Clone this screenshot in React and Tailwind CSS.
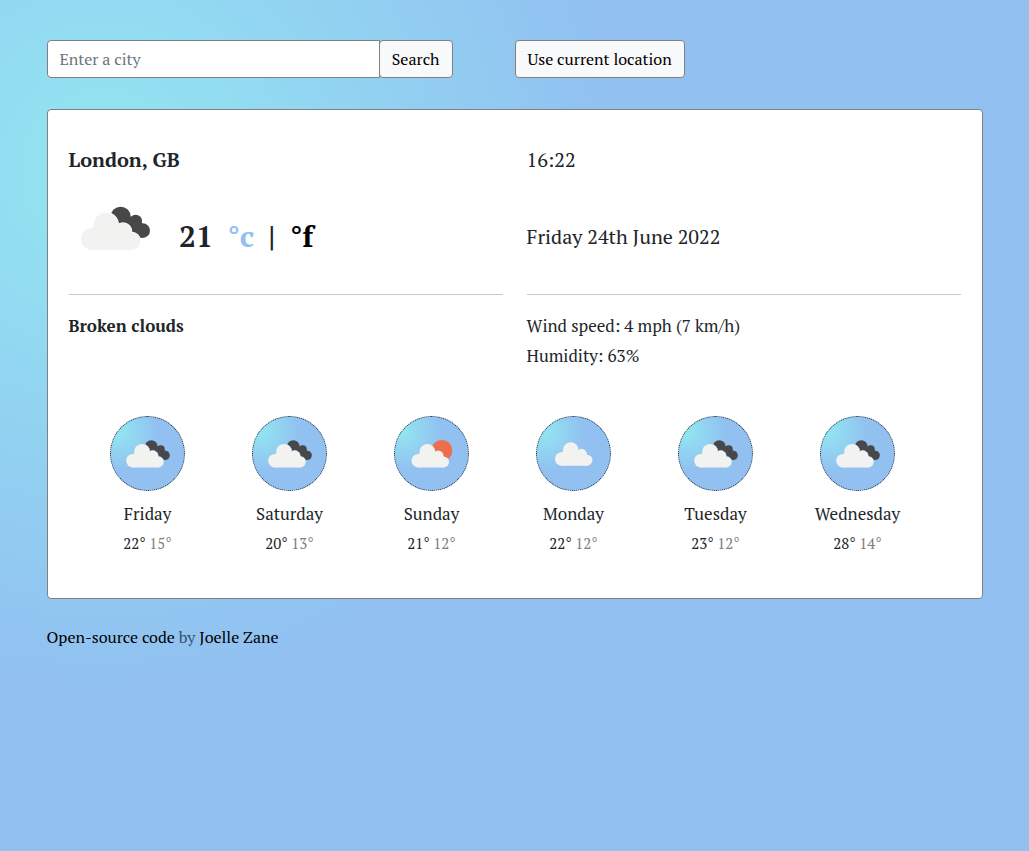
import { useId } from "react";

const forecast = [
  { day: "Friday", icon: "broken", high: 22, low: 15 },
  { day: "Saturday", icon: "broken", high: 20, low: 13 },
  { day: "Sunday", icon: "sunny", high: 21, low: 12 },
  { day: "Monday", icon: "cloud", high: 22, low: 12 },
  { day: "Tuesday", icon: "broken", high: 23, low: 12 },
  { day: "Wednesday", icon: "broken", high: 28, low: 14 },
];

function LightCloud(props) {
  return (
    <g {...props}>
      <circle cx="47" cy="118" r="32" />
      <circle cx="90" cy="76" r="37" />
      <circle cx="141" cy="96" r="26" />
      <circle cx="167" cy="124" r="26" />
      <path d="M47 150V88L60 76H120L150 90L168 99V150Z" />
    </g>
  );
}

function WeatherIcon({ kind, className }) {
  const id = useId();
  return (
    <svg viewBox="0 -32 237 237" className={className} aria-hidden="true">
      <mask id={id}>
        <rect x="0" y="-32" width="237" height="237" fill="white" />
        <LightCloud fill="black" stroke="black" strokeWidth="4" />
      </mask>
      {kind === "broken" && (
        <g mask={`url(#${id})`}>
          <g fill="#48484a">
            <circle cx="134" cy="51" r="30" />
            <circle cx="179" cy="64" r="19" />
            <circle cx="200" cy="93" r="22" />
            <path d="M112 72L150 28L164 52L197 68L200 74L196 115L140 110Z" />
          </g>
        </g>
      )}
      {kind === "sunny" && <circle cx="165" cy="70" r="50" fill="#ec6e4c" />}
      <LightCloud
        fill="#f2f2f1"
        transform={
          kind === "cloud" ? "translate(13 -8)" : kind === "sunny" ? "translate(6.500 0)" : undefined
        }
      />
    </svg>
  );
}

export default function App() {
  return (
    <div className="min-h-screen bg-[radial-gradient(circle_at_10%_20%,rgb(147,230,241)_0%,rgb(145,192,241)_45.5%)] pt-10 font-['PT_Serif','Liberation_Serif',serif] text-base text-[#212529]">
      <main className="mx-auto w-[936px]">
        <div className="grid h-[38px] grid-cols-2">
          <form className="flex w-[406px]" onSubmit={(e) => e.preventDefault()}>
            <input
              type="text"
              placeholder="Enter a city"
              className="min-w-0 flex-1 rounded-l border border-[#808080] bg-white px-3 placeholder:text-[#6c757d] placeholder:opacity-100"
            />
            <button className="-ml-px rounded border border-[#808080] bg-[#f8f9fa] px-3 text-black">
              Search
            </button>
          </form>
          <button className="justify-self-start rounded border border-[#808080] bg-[#f8f9fa] px-3 text-black">
            Use current location
          </button>
        </div>

        <section className="mt-[31px] h-[490px] rounded border border-[#808080] bg-white px-[21px] pt-[35px]">
          <div className="grid grid-cols-2 gap-x-6">
            <div>
              <h1 className="text-xl leading-[30px] font-bold">London, GB</h1>
              <div className="flex h-[120px] items-start border-b border-[#c8c9ca]">
                <WeatherIcon kind="broken" className="mt-[14px] ml-[7px] size-[79px]" />
                <div className="mt-[39px] ml-[24.5px] flex text-[30px] leading-[45px] font-bold">
                  <span>21</span>
                  <span className="ml-[14.5px] text-[#91c0f1]">°c</span>
                  <span className="ml-[14px]">|</span>
                  <span className="ml-[14.5px] text-black">°f</span>
                </div>
              </div>
              <p className="mt-[18px] text-[17px] leading-[26px] font-bold">Broken clouds</p>
            </div>
            <div>
              <p className="text-xl leading-[30px]">16:22</p>
              <div className="h-[120px] border-b border-[#c8c9ca] pt-[47px]">
                <p className="text-xl leading-[30px]">Friday 24th June 2022</p>
              </div>
              <p className="mt-[18px] text-[17px] leading-[26px]">Wind speed: 4 mph (7 km/h)</p>
              <p className="mt-1 text-[17px] leading-[26px]">Humidity: 63%</p>
            </div>
          </div>

          <div className="mt-[47px] ml-2 grid w-[852px] grid-cols-6">
            {forecast.map((d) => (
              <div key={d.day} className="flex flex-col items-center">
                <div className="flex size-[75px] items-center justify-center rounded-full border border-dotted border-[#212529] bg-[radial-gradient(circle_at_10%_20%,rgb(147,230,241)_0%,rgb(145,192,241)_45.5%)]">
                  <WeatherIcon kind={d.icon} className="size-[50px]" />
                </div>
                <p className="mt-[10px] text-[17px] leading-[26px]">{d.day}</p>
                <p className="mt-[5px] text-[15px] leading-[22px]">
                  {d.high}° <span className="text-[#808080]">{d.low}°</span>
                </p>
              </div>
            ))}
          </div>
        </section>

        <footer className="mt-[26px] leading-6 text-[#3c4f63]">
          <a className="text-black">Open-source code</a> by <a className="text-black">Joelle Zane</a>
        </footer>
      </main>
    </div>
  );
}
